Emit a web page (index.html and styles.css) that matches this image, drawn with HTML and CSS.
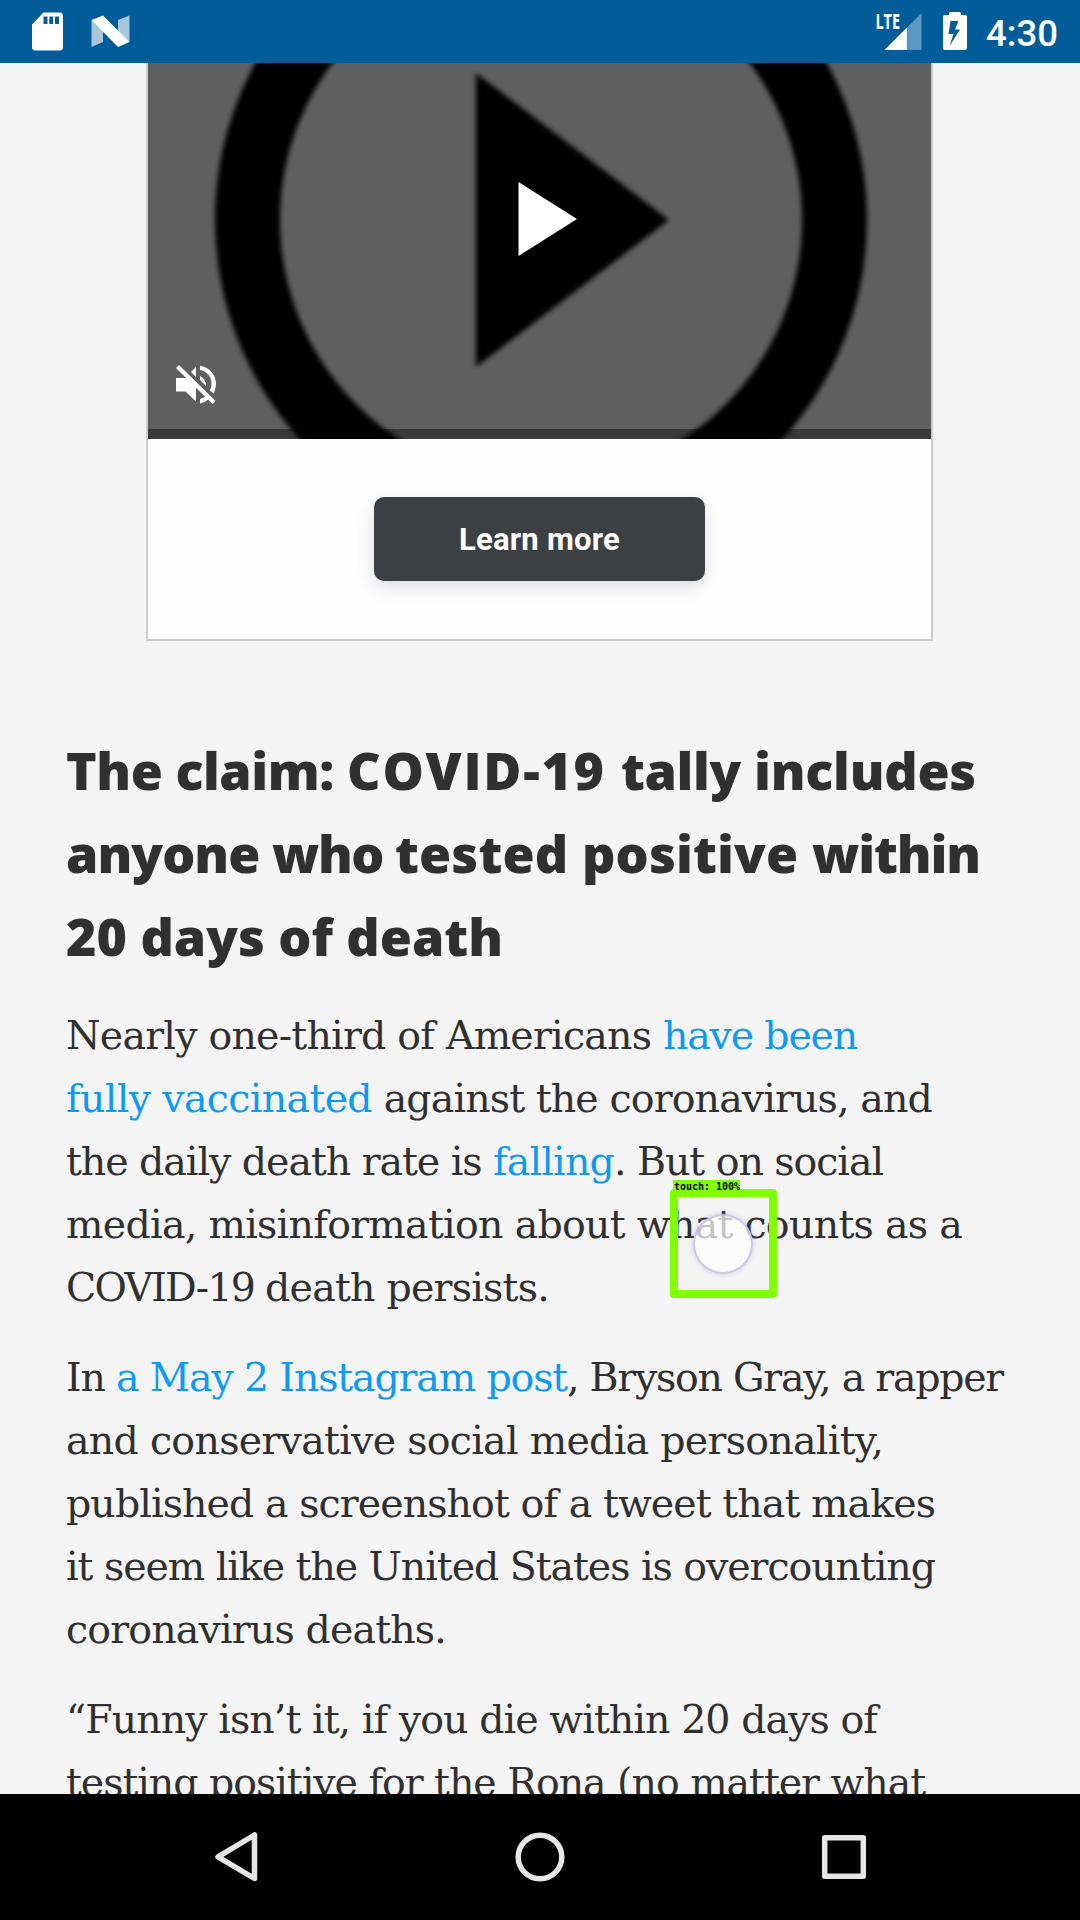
FILE: index.html
```html
<!DOCTYPE html>
<html lang="en">
<head>
<meta charset="utf-8">
<title>Fact check</title>
<link rel="stylesheet" href="styles.css">
</head>
<body>
<div class="screen">
  <header class="status-bar">
    <svg class="status-left" width="140" height="63" viewBox="0 0 140 63">
      <path fill="#fff" fill-rule="evenodd" d="M43.500 12.500H59.500Q63 12.500 63 16V47Q63 50.500 59.500 50.500H35.500Q32 50.500 32 47V24.500ZM43.500 16.500V24H47.500V16.500ZM49.300 16.500V24H53.200V16.500ZM55 16.500V24H59V16.500Z"/>
      <path fill="#fff" opacity=".66" d="M91.500 20V47L103 42V29ZM118 20L129.500 15.500V42L118 33Z"/>
      <path fill="#fff" d="M91.500 20L103 15.500L129.500 42L118 47Z"/>
    </svg>
    <div class="status-right">
      <svg width="110" height="63" viewBox="870 0 110 63">
        <path fill="#5a98c2" d="M884.500 50L921.500 13V50Z"/>
        <path fill="#fff" d="M884.500 50L906.800 27.700V50Z"/>
        <text class="lte" x="875.500" y="29.300" textLength="24.500" lengthAdjust="spacingAndGlyphs">LTE</text>
        <path fill="#fff" fill-rule="evenodd" d="M949 15V13.500Q949 12 950.500 12H959.500Q961 12 961 13.500V15H965Q967 15 967 17V48Q967 50 965 50H945Q943 50 943 48V17Q943 15 945 15ZM950.500 21L948.500 34H953.500L949.500 46L960 29.500H955L958.500 21Z"/>
      </svg>
      <span class="clock" data-w="72">4:30</span>
    </div>
  </header>

  <main class="page">
    <section class="ad">
      <div class="video">
        <svg width="783" height="376" viewBox="148 63 783 376">
          <defs><filter id="soft" filterUnits="userSpaceOnUse" x="148" y="-120" width="783" height="700"><feGaussianBlur stdDeviation="2.500"/></filter></defs>
          <rect x="148" y="63" width="783" height="376" fill="#5f5f5f"/>
          <rect x="148" y="429" width="783" height="10" fill="#393939"/>
          <g filter="url(#soft)">
            <circle cx="541" cy="220" r="293.500" fill="none" stroke="#000" stroke-width="65"/>
            <path d="M476 73L669 220L476 367Z"/>
          </g>
          <path fill="#fff" d="M518.500 182L577 219L518.500 256Z"/>
          <g fill="#fff">
            <path d="M176 378H187L196 387V401.500L185.500 391.500H176Z"/>
            <path d="M191 372L196 367V377Z"/>
            <path d="M200 376Q206 379 206 386L200 380Z"/>
            <path d="M200 365.500C211 368 216 376 216 384Q216 388 213.800 393.500L209.800 390.500Q211.800 387 211.500 383C211 376 207 371.500 200 370Z"/>
            <path d="M200 399Q204 398 206 395.500L209.500 398.500Q206 402 200 403.500Z"/>
            <path d="M179 365L215.500 401L212.500 404L176 368Z"/>
          </g>
        </svg>
      </div>
      <div class="ad-action"><a class="ad-button"><span data-w="161">Learn more</span></a></div>
    </section>

    <article class="story">
      <h2>
        <span class="line"><span data-w="281">The claim: </span><span data-w="274">COVID-19 </span><span data-w="133">tally </span><span data-w="222">includes</span></span>
        <span class="line"><span data-w="206">anyone </span><span data-w="123">who </span><span data-w="187">tested </span><span data-w="230">positive </span><span data-w="168">within</span></span>
        <span class="line"><span data-w="437">20 days of death</span></span>
      </h2>
      <p>
        <span class="line"><span data-w="597">Nearly one-third of Americans </span><a data-w="194">have been</a></span>
        <span class="line"><a data-w="306">fully vaccinated</a><span data-w="560"> against the coronavirus, and</span></span>
        <span class="line"><span data-w="427">the daily death rate is </span><a data-w="121">falling</a><span data-w="269">. But on social</span></span>
        <span class="line"><span data-w="896">media, misinformation about what counts as a</span></span>
        <span class="line"><span data-w="199">COVID-19 </span><span data-w="284">death persists.</span></span>
      </p>
      <p>
        <span class="line"><span data-w="50">In </span><a data-w="451">a May 2 Instagram post</a><span data-w="436">, Bryson Gray, a rapper</span></span>
        <span class="line"><span data-w="817">and conservative social media personality,</span></span>
        <span class="line"><span data-w="869">published a screenshot of a tweet that makes</span></span>
        <span class="line"><span data-w="869">it seem like the United States is overcounting</span></span>
        <span class="line"><span data-w="380">coronavirus deaths.</span></span>
      </p>
      <p>
        <span class="line"><span data-w="811">“Funny isn’t it, if you die within 20 days of</span></span>
        <span class="line"><span data-w="859">testing positive for the Rona (no matter what</span></span>
      </p>
    </article>
  </main>

  <nav class="nav-bar">
    <svg width="1080" height="126" viewBox="0 1794 1080 126" fill="none" stroke="#e6e6e6" stroke-width="5.500" stroke-linejoin="round">
      <path d="M254.500 1835V1878.500L218 1856.800Z"/>
      <circle cx="540" cy="1857" r="21.800"/>
      <rect x="824.700" y="1837.700" width="38.600" height="38.600"/>
    </svg>
  </nav>

  <div class="touch">
    <span class="touch-label" data-w="66">touch: 100%</span>
    <div class="touch-box"><i class="touch-dot"></i></div>
  </div>
</div>
<script src="fit.js"></script>
</body>
</html>
```
FILE: styles.css
```css
* { box-sizing: border-box; }
body { margin: 0; }
.screen {
  position: relative;
  display: flex;
  flex-direction: column;
  width: 1080px;
  height: 1920px;
  overflow: hidden;
  background: #f4f4f4;
}
svg { display: block; }
.status-bar {
  display: flex;
  justify-content: space-between;
  height: 63px;
  flex: none;
  background: #005d99;
}
.status-right { display: flex; align-items: center; padding-right: 22px; gap: 6px; }
.lte { font: 700 22px "Open Sans", sans-serif; fill: #fff; }
.clock {
  font: 500 36.5px/60px Roboto, sans-serif;
  color: #fff;
  padding-top: 4px;
}
.page { flex: 1; min-height: 0; overflow: hidden; }
.ad {
  width: 787px;
  margin-left: 146px;
  border: solid #ccc;
  border-width: 0 2px 2px;
  background: #fefefe;
}
.ad-action {
  display: flex;
  justify-content: center;
  padding: 58px 0;
}
.ad-button {
  display: flex;
  align-items: center;
  justify-content: center;
  width: 331px;
  height: 84px;
  border-radius: 10px;
  background: #3c4043;
  box-shadow: 0 6px 18px rgba(60, 64, 90, .17);
  color: #fff;
  font: 700 31px/1 Roboto, sans-serif;
}
.story { padding: 87px 66px 0; color: #303030; }
.line { display: block; white-space: pre; }
h2 {
  margin: 0 0 27px;
  font: 800 52px/83px "Open Sans", sans-serif;
}
p {
  margin: 0 0 27px;
  font: 39.5px/63px "DejaVu Serif", serif;
}
p a { color: #0f9af2; }
.nav-bar { flex: 0 0 126px; background: #000; }
.touch { position: absolute; left: 670px; top: 1180px; width: 107px; }
.touch-label {
  position: absolute;
  left: 3px;
  top: 0;
  height: 12px;
  padding-left: 1px;
  background: #80ff00;
  color: #000;
  font: 700 10px/14px "DejaVu Sans Mono", monospace;
  white-space: pre;
}
.touch-box {
  display: flex;
  align-items: center;
  justify-content: center;
  height: 109px;
  margin-top: 9px;
  border: 8px solid #80ff00;
  border-radius: 4px;
}
.touch-dot {
  width: 60px;
  height: 60px;
  margin-right: 2px;
  border: 2px solid rgba(190, 185, 225, .8);
  border-radius: 50%;
  background: rgba(255, 255, 255, .72);
  box-shadow: 0 0 5px rgba(150, 140, 200, .4);
}
```
FILE: fit.js
```js
document.querySelectorAll('[data-w]').forEach(function (run) {
  var range = document.createRange();
  range.selectNodeContents(run);
  var gap = Number(run.dataset.w) - range.getBoundingClientRect().width;
  run.style.letterSpacing = gap / run.textContent.length + 'px';
});
```
